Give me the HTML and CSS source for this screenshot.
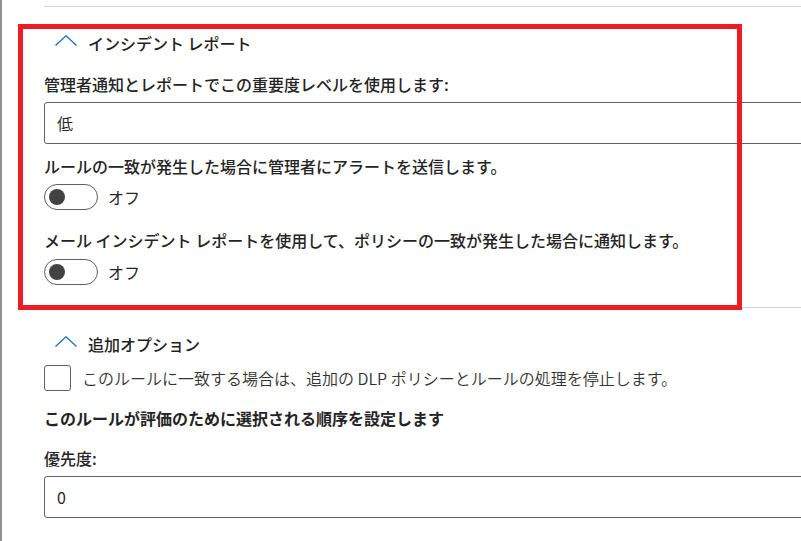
FILE: index.html
```html
<!DOCTYPE html>
<html lang="ja">
<head>
<meta charset="utf-8">
<link rel="stylesheet" href="styles.css">
</head>
<body>
<div class="page">
  <section class="section section-first">
    <div class="sec-head">
      <svg class="chev" width="22" height="11" viewBox="0 0 22 11"><path d="M0.5 10.5 L11 0.8 L21.5 10.5" fill="none" stroke="#1a6fc0" stroke-width="1.3"/></svg>
      <span class="sec-title">インシデント レポート</span>
    </div>
    <div class="label l1">管理者通知とレポートでこの重要度レベルを使用します:</div>
    <div class="field f1">低</div>
    <div class="label l2">ルールの一致が発生した場合に管理者にアラートを送信します。</div>
    <div class="toggle-row t1"><span class="toggle"><span class="knob"></span></span><span class="toggle-text">オフ</span></div>
    <div class="label l3">メール インシデント レポートを使用して、ポリシーの一致が発生した場合に通知します。</div>
    <div class="toggle-row t2"><span class="toggle"><span class="knob"></span></span><span class="toggle-text">オフ</span></div>
  </section>
  <section class="section">
    <div class="sec-head">
      <svg class="chev" width="22" height="11" viewBox="0 0 22 11"><path d="M0.5 10.5 L11 0.8 L21.5 10.5" fill="none" stroke="#1a6fc0" stroke-width="1.3"/></svg>
      <span class="sec-title">追加オプション</span>
    </div>
    <div class="check-row"><span class="checkbox"></span><span class="check-text">このルールに一致する場合は、追加の DLP ポリシーとルールの処理を停止します。</span></div>
    <div class="label bold l4">このルールが評価のために選択される順序を設定します</div>
    <div class="label l5">優先度:</div>
    <div class="field f2">0</div>
  </section>
  <div class="highlight"></div>
</div>
</body>
</html>
```
FILE: styles.css
```css
html, body {
  margin: 0;
  padding: 0;
  background: #fff;
  overflow: hidden;
}
body {
  font-family: "Noto Sans CJK JP", "Noto Sans", sans-serif;
  color: #242424;
  font-size: 16px;
}
.page {
  position: relative;
  width: 900px;
  height: 541px;
  border-left: 2px solid #8f8f8f;
  padding-top: 6px;
  box-sizing: border-box;
}
.section {
  margin-left: 42px;
  border-top: 1px solid #d4d4d4;
  display: flex;
  flex-direction: column;
  align-items: flex-start;
}
.section-first {
  padding-bottom: 22px;
}
.sec-head {
  display: flex;
  align-items: center;
  height: 24px;
  margin-top: 24px;
  padding-left: 11px;
  gap: 11px;
}
.chev {
  display: block;
  margin-top: -5px;
}
.sec-title {
  font-weight: 500;
  font-size: 16px;
  line-height: 24px;
  color: #1f1f1f;
}
.label {
  line-height: 22px;
  white-space: nowrap;
  font-weight: 500;
}
.label.bold { font-weight: 700; }
.l1 { margin-top: 18px; }
.l2 { margin-top: 11px; }
.l3 { margin-top: 19px; }
.l4 { margin-top: 16px; }
.l5 { margin-top: 18px; }
.field {
  box-sizing: border-box;
  width: 820px;
  height: 42px;
  border: 1px solid #616161;
  border-radius: 3px;
  padding-left: 12px;
  display: flex;
  align-items: center;
  margin-top: 7px;
  color: #2b2b2b;
}
.toggle-row {
  display: flex;
  align-items: center;
  height: 26px;
  gap: 10px;
}
.t1 { margin-top: 7px; }
.t2 { margin-top: 8px; }
.toggle {
  box-sizing: border-box;
  width: 54px;
  height: 26px;
  border: 1px solid #616161;
  border-radius: 13px;
  display: flex;
  align-items: center;
  padding-left: 4px;
}
.knob {
  width: 16px;
  height: 16px;
  border-radius: 50%;
  background: #424242;
}
.toggle-text {
  line-height: 22px;
}
.check-row {
  display: flex;
  align-items: center;
  height: 26px;
  margin-top: 9px;
  gap: 11px;
}
.checkbox {
  box-sizing: border-box;
  width: 27px;
  height: 26px;
  border: 1px solid #616161;
  border-radius: 3px;
}
.check-text {
  white-space: nowrap;
  color: #333;
  font-weight: 350;
}
.highlight {
  position: absolute;
  left: 16px;
  top: 24px;
  width: 724px;
  height: 286px;
  box-sizing: border-box;
  border: 5px solid #ed1c24;
}
```
